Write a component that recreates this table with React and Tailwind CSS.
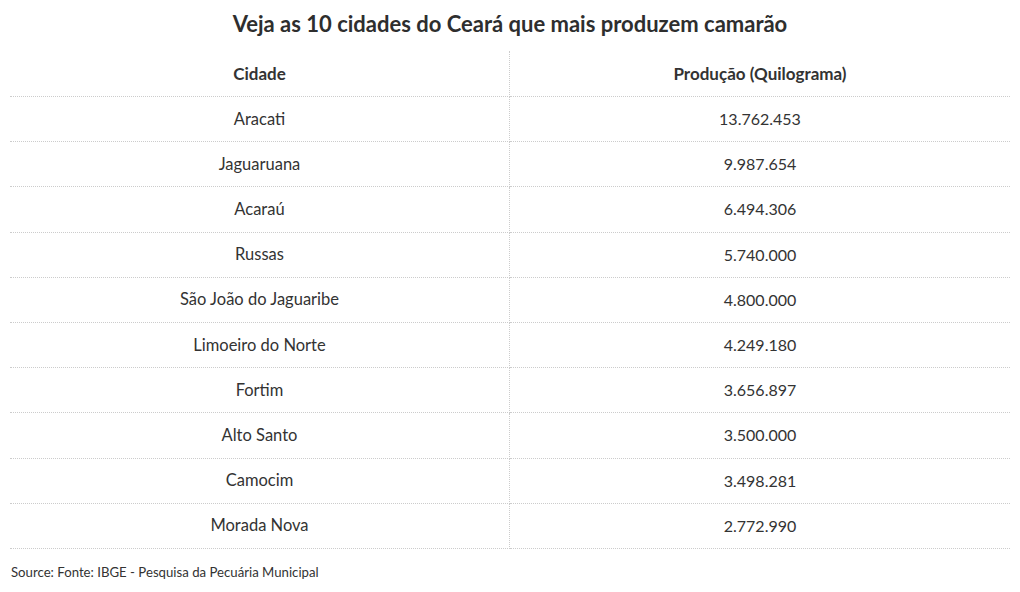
import React from 'react';

const rows = [
    ['Aracati', '13.762.453'],
    ['Jaguaruana', '9.987.654'],
    ['Acaraú', '6.494.306'],
    ['Russas', '5.740.000'],
    ['São João do Jaguaribe', '4.800.000'],
    ['Limoeiro do Norte', '4.249.180'],
    ['Fortim', '3.656.897'],
    ['Alto Santo', '3.500.000'],
    ['Camocim', '3.498.281'],
    ['Morada Nova', '2.772.990'],
];

function App() {
    return (
        <div className="w-[1020px] h-[592px] bg-white text-[#333] px-[10px] font-['Lato',sans-serif]">
            <h1 className="h-[51px] pt-[9px] text-center text-[22px] font-bold leading-[30px] text-[#2e2e2e]">
                Veja as 10 cidades do Ceará que mais produzem camarão
            </h1>

            {/* Tabla */}
            <div className="grid grid-cols-2">
                <div className="h-[46px] flex items-center justify-center text-[17px] font-bold border-b border-r border-dotted border-[#ccc]">
                    Cidade
                </div>
                <div className="h-[46px] flex items-center justify-center text-[17px] font-bold border-b border-dotted border-[#ccc]">
                    Produção (Quilograma)
                </div>
                {rows.map(([city, value]) => (
                    <React.Fragment key={city}>
                        <div className="h-[45.2px] flex items-center justify-center text-[16.5px] border-b border-r border-dotted border-[#ccc]">
                            {city}
                        </div>
                        <div className="h-[45.2px] flex items-center justify-center text-[16px] border-b border-dotted border-[#ccc]">
                            {value}
                        </div>
                    </React.Fragment>
                ))}
            </div>

            <p className="mt-[14px] pl-px text-[13.2px] leading-[18px]">
                Source: Fonte: IBGE - Pesquisa da Pecuária Municipal
            </p>
        </div>
    );
}

export default App;
